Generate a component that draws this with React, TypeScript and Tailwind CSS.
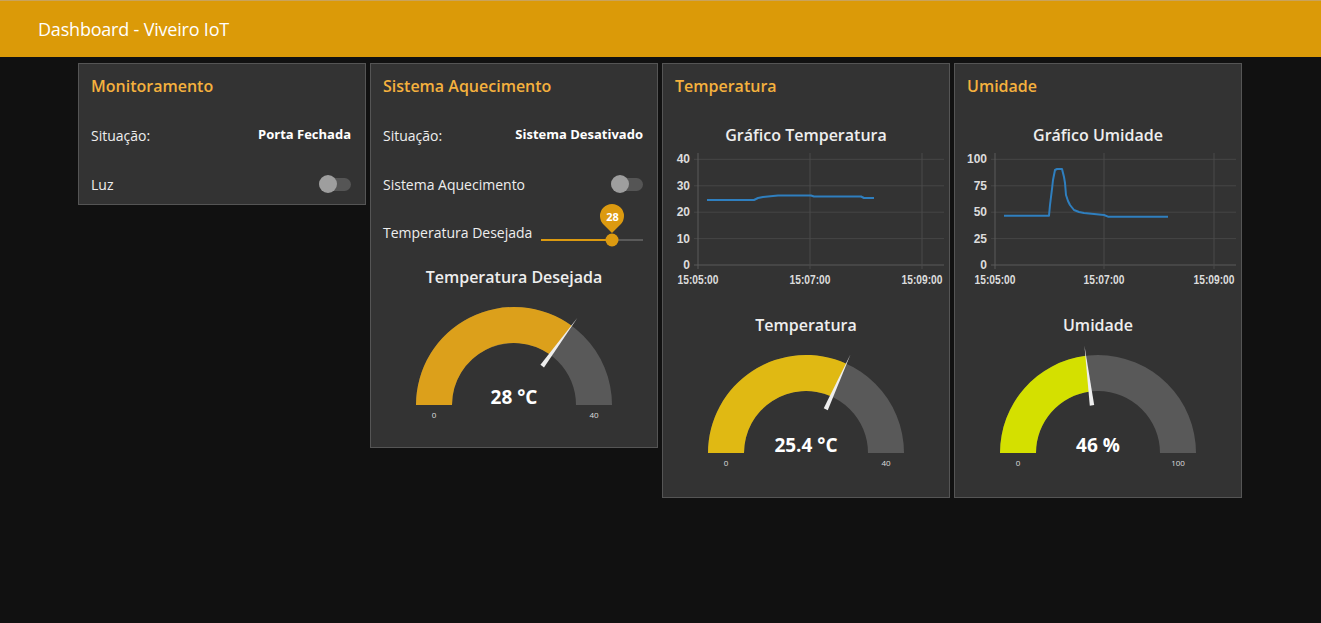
import React from "react";

type Pt = [number, number];

const tempLine: Pt[] = [
  [44, 53], [91, 53], [95, 51], [100, 50], [105, 49.5], [115, 48.5], [148, 48.5],
  [151, 49.5], [198, 49.5], [201, 51], [211, 51],
];

const humLine: Pt[] = [
  [49, 68.7], [94, 68.7], [95, 58], [96, 50], [97, 42], [98, 33], [100, 23], [102, 22],
  [107, 22], [109, 30], [110, 36], [111, 48], [113, 54], [115, 58], [119, 63], [124, 65],
  [129, 66], [149, 68], [153, 69.7], [213, 69.7],
];

const Card = ({ title, children }: { title: string; children: React.ReactNode }) => (
  <div className="w-[288px] border border-[#555] bg-[#333] flex flex-col">
    <div className="h-[44px] px-3 flex items-center text-[16px] font-semibold text-[#f5b13e]">
      {title}
    </div>
    {children}
  </div>
);

const Row = ({ children, className = "" }: { children: React.ReactNode; className?: string }) => (
  <div className={`h-[38px] pl-3 pr-[14px] flex items-center justify-between text-[14px] text-[#eee] ${className}`}>
    {children}
  </div>
);

const Switch = () => (
  <div className="relative w-[32px] h-[18px] flex items-center">
    <div className="w-full h-[13px] rounded-full bg-[#555]" />
    <div className="absolute left-0 top-0 w-[18px] h-[18px] rounded-full bg-[#9e9e9e]" />
  </div>
);

const Slider = () => (
  <div className="relative w-[102px] h-[2px] mt-[16px] flex">
    <div className="w-[71px] h-full bg-[#dc9a10]" />
    <div className="flex-1 h-full bg-[#5a5a5a]" />
    <div className="absolute left-[71px] top-1/2 -translate-x-1/2 -translate-y-1/2 w-[13px] h-[13px] rounded-full bg-[#dc9a10]" />
    <div className="absolute left-[71px] top-[-35px] -translate-x-1/2 w-[24px] h-[24px] rounded-[50%_50%_50%_0] -rotate-45 bg-[#dc9a10] flex items-center justify-center">
      <span className="rotate-45 text-[11px] font-bold text-white leading-none">28</span>
    </div>
  </div>
);

const Gauge = ({
  title, value, min, max, unit, color,
}: { title: string; value: number; min: number; max: number; unit: string; color: string }) => {
  const cx = 143, cy = 116, ro = 98, ri = 62;
  const f = (value - min) / (max - min);
  const th = Math.PI * (1 - f);
  const ox = cx + ro * Math.cos(th), oy = cy - ro * Math.sin(th);
  const ix = cx + ri * Math.cos(th), iy = cy - ri * Math.sin(th);
  const full = `M${cx - ro},${cy} A${ro},${ro} 0 0 1 ${cx + ro},${cy} L${cx + ri},${cy} A${ri},${ri} 0 0 0 ${cx - ri},${cy} Z`;
  const part = `M${cx - ro},${cy} A${ro},${ro} 0 0 1 ${ox},${oy} L${ix},${iy} A${ri},${ri} 0 0 0 ${cx - ri},${cy} Z`;
  const nx = Math.cos(th), ny = -Math.sin(th);
  const px = -ny, py = nx;
  const b = 48, t = 108, w = 2.2;
  const needle = `${cx + nx * b + px * w},${cy + ny * b + py * w} ${cx + nx * b - px * w},${cy + ny * b - py * w} ${cx + nx * t},${cy + ny * t}`;
  return (
    <div className="flex flex-col">
      <div className="h-[24px] flex items-center justify-center text-[16px] font-semibold text-[#eee]">
        {title}
      </div>
      <svg width={286} height={130} className="font-['Open_Sans',sans-serif]">
        <path d={full} fill="#595959" />
        <path d={part} fill={color} />
        <polygon points={needle} fill="#eee" />
        <text x={cx} y={108} textAnchor="middle" dominantBaseline="central" fill="#fff" fontSize={19} fontWeight={700}>
          {value} {unit}
        </text>
        <text x={cx - 80} y={125} textAnchor="middle" dominantBaseline="central" fill="#ddd" fontSize={8}>{min}</text>
        <text x={cx + 80} y={125} textAnchor="middle" dominantBaseline="central" fill="#ddd" fontSize={8}>{max}</text>
      </svg>
    </div>
  );
};

const Chart = ({
  title, labels, axisX, vx, data,
}: { title: string; labels: string[]; axisX: number; vx: number[]; data: Pt[] }) => {
  const ys = [12.3, 38.8, 65.2, 91.6, 118];
  return (
    <div className="flex flex-col">
      <div className="h-[24px] flex items-center justify-center text-[16px] font-semibold text-[#eee]">
        {title}
      </div>
      <svg width={286} height={146} className="font-['Liberation_Sans',Arial,sans-serif]">
        {ys.map((y, i) => (
          <line key={y} x1={axisX - 4} x2={281} y1={y} y2={y} stroke={i === 4 ? "#5a5a5a" : "#464646"} strokeWidth={1} />
        ))}
        {vx.map((x, i) => (
          <line key={x} x1={x} x2={x} y1={6} y2={122} stroke={i === 0 ? "#5a5a5a" : "#4a4a4a"} strokeWidth={1} />
        ))}
        {labels.map((l, i) => (
          <text key={l} x={axisX - 8} y={ys[i]} textAnchor="end" dominantBaseline="central" fill="#dcdcdc" fontSize={12} fontWeight={700}>
            {l}
          </text>
        ))}
        {["15:05:00", "15:07:00", "15:09:00"].map((l, i) => (
          <text key={l} x={vx[i]} y={133} textAnchor="middle" dominantBaseline="central" fill="#dcdcdc" fontSize={12} fontWeight={700} textLength={41} lengthAdjust="spacingAndGlyphs">
            {l}
          </text>
        ))}
        <polyline points={data.map((p) => p.join(",")).join(" ")} fill="none" stroke="#2f7fbf" strokeWidth={2} strokeLinejoin="round" />
      </svg>
    </div>
  );
};

export default function App() {
  return (
    <div className="min-h-screen w-full bg-[#111] font-['Open_Sans','Noto_Sans',sans-serif]">
      <header className="h-[57px] bg-[#db9a08] border-t border-[#c9a35c] flex items-center pl-[38px]">
        <h1 className="text-[18px] text-white tracking-[-0.2px]">Dashboard - Viveiro IoT</h1>
      </header>

      <div className="flex items-start gap-[4px] pt-[6px] pl-[78px]">
        <Card title="Monitoramento">
          <div className="mt-[8px] flex flex-col gap-[11px] pb-[1px]">
            <Row>
              <span>Situação:</span>
              <span className="text-[13px] font-bold text-white">Porta Fechada</span>
            </Row>
            <Row>
              <span>Luz</span>
              <Switch />
            </Row>
          </div>
        </Card>

        <Card title="Sistema Aquecimento">
          <div className="mt-[8px] flex flex-col gap-[11px]">
            <Row>
              <span>Situação:</span>
              <span className="text-[13px] font-bold text-white">Sistema Desativado</span>
            </Row>
            <Row>
              <span>Sistema Aquecimento</span>
              <Switch />
            </Row>
          </div>
          <Row className="mt-[10px]">
            <span>Temperatura Desejada</span>
            <Slider />
          </Row>
          <div className="mt-[14px] pb-[28px]">
            <Gauge title="Temperatura Desejada" value={28} min={0} max={40} unit="°C" color="#dca01b" />
          </div>
        </Card>

        <Card title="Temperatura">
          <div className="mt-[15px]">
            <Chart title="Gráfico Temperatura" labels={["40", "30", "20", "10", "0"]} axisX={35} vx={[35, 147, 259]} data={tempLine} />
          </div>
          <div className="mt-[20px] pb-[30px]">
            <Gauge title="Temperatura" value={25.4} min={0} max={40} unit="°C" color="#e0b913" />
          </div>
        </Card>

        <Card title="Umidade">
          <div className="mt-[15px]">
            <Chart title="Gráfico Umidade" labels={["100", "75", "50", "25", "0"]} axisX={40} vx={[40, 149, 259]} data={humLine} />
          </div>
          <div className="mt-[20px] pb-[30px]">
            <Gauge title="Umidade" value={46} min={0} max={100} unit="%" color="#d4e000" />
          </div>
        </Card>
      </div>
    </div>
  );
}
